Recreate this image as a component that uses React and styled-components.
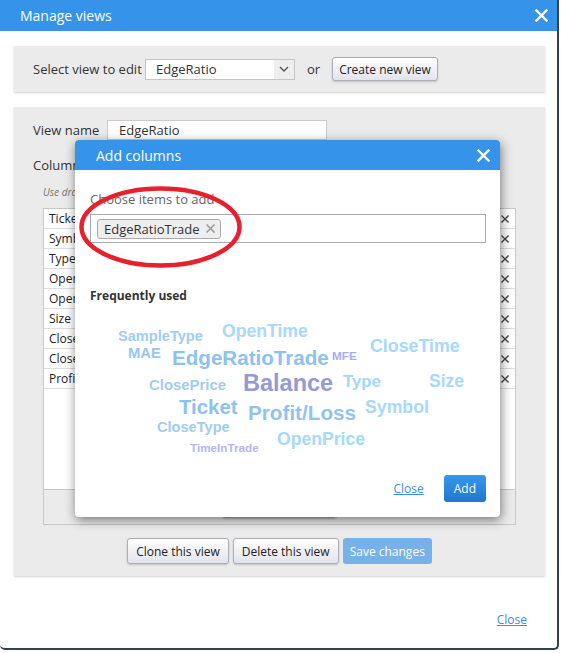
import styled, { createGlobalStyle } from 'styled-components';

const GlobalStyle = createGlobalStyle`
  body {
    margin: 0;
    background: #fff;
    font-family: "Open Sans", "Liberation Sans", sans-serif;
  }
`;

const Dialog = styled.div`
  position: relative;
  width: 559px;
  height: 650px;
  box-sizing: border-box;
  background: #fff;
  border-right: 2px solid #34414f;
  border-bottom: 2px solid #34414f;
  border-radius: 0 0 5px 5px;
  display: flex;
  flex-direction: column;
`;

const Header = styled.div`
  height: 31px;
  background: #3594e9;
  color: #fff;
  font-size: 14px;
  display: flex;
  align-items: center;
  justify-content: space-between;
  padding: 0 9px 0 20px;
`;

const Body = styled.div`
  padding: 15px 12px 0 14px;
`;

const Panel = styled.div`
  background: #ebebeb;
  box-shadow: 0 1px 2px rgba(0, 0, 0, 0.18);
`;

const SelectPanel = styled(Panel)`
  height: 46px;
  display: flex;
  align-items: center;
  padding-left: 19px;
  font-size: 13px;
  color: #333;
`;

const SelectLabel = styled.span`
  width: 112px;
`;

const SelectBox = styled.div`
  width: 150px;
  height: 21px;
  box-sizing: border-box;
  border: 1px solid #c6c6c6;
  background: #fff;
  display: flex;
  align-items: center;
`;

const SelectValue = styled.span`
  flex: 1;
  padding-left: 10px;
  font-size: 13px;
  color: #333;
`;

const SelectArrow = styled.span`
  width: 20px;
  height: 100%;
  background: #eeeeee;
  display: flex;
  align-items: center;
  justify-content: center;
`;

const Or = styled.span`
  margin: 0 12px;
`;

const Button = styled.button`
  height: ${(p) => p.$h || 26}px;
  padding: 0 ${(p) => p.$px || 8}px;
  font-family: "Open Sans", "Liberation Sans", sans-serif;
  font-size: 12px;
  color: #222;
  border: 1px solid #adadb8;
  border-radius: 3px;
  background: linear-gradient(#ffffff, #e3e3ec);
  box-shadow: 0 1px 2px rgba(0, 0, 0, 0.18);
`;

const PrimaryButton = styled.button`
  height: ${(p) => p.$h || 26}px;
  padding: 0 ${(p) => p.$px || 7}px;
  font-family: "Open Sans", "Liberation Sans", sans-serif;
  font-size: 12px;
  color: #fff;
  border: none;
  border-radius: 3px;
  background: ${(p) => (p.$faded ? '#77b1ea' : 'linear-gradient(#3897ea, #1f77d0)')};
`;

const EditPanel = styled(Panel)`
  margin-top: 15px;
  padding: 13px 0 12px;
  display: flex;
  flex-direction: column;
  font-size: 13px;
  color: #333;
`;

const FieldRow = styled.div`
  display: flex;
  align-items: center;
  height: 20px;
  padding-left: 19px;
`;

const FieldLabel = styled.span`
  width: 74px;
`;

const TextInput = styled.input`
  width: 220px;
  height: 20px;
  box-sizing: border-box;
  border: 1px solid #cacaca;
  padding: 0 11px;
  font-family: "Open Sans", "Liberation Sans", sans-serif;
  font-size: 13px;
  color: #333;
  outline: none;
`;

const ColumnsLabel = styled.div`
  margin-top: 16px;
  padding-left: 19px;
  line-height: 18px;
`;

const Hint = styled.div`
  margin: 11px 0 0 29px;
  font-size: 10px;
  font-style: italic;
  color: #777;
  line-height: 14px;
`;

const ColumnsTable = styled.div`
  margin: 9px 29px 0;
  height: 317px;
  box-sizing: border-box;
  border: 1px solid #c8c8c8;
  display: flex;
  flex-direction: column;
`;

const RowList = styled.div`
  height: 280px;
  background: #fff;
  border-bottom: 1px solid #c8c8c8;
`;

const Row = styled.div`
  height: 20px;
  box-sizing: border-box;
  border-bottom: 1px solid #dedede;
  display: flex;
  align-items: center;
  justify-content: space-between;
  padding: 0 6px 0 5px;
  font-size: 12px;
  color: #222;
`;

const TableFooter = styled.div`
  flex: 1;
  display: flex;
  align-items: center;
  justify-content: center;
`;

const ActionRow = styled.div`
  margin-top: 13px;
  display: flex;
  justify-content: center;
  gap: 4px;
`;

const Footer = styled.div`
  display: flex;
  justify-content: flex-end;
  padding: 36px 30px 0 0;
`;

const Link = styled.a`
  font-size: 12px;
  line-height: 16px;
  color: #3a8ee6;
  text-decoration: underline;
`;

const Modal = styled.div`
  position: absolute;
  left: 75px;
  top: 140px;
  width: 425px;
  height: 377px;
  background: #fff;
  border-radius: 4px;
  box-shadow: 1px 3px 11px rgba(0, 0, 0, 0.5);
  display: flex;
  flex-direction: column;
`;

const ModalHeader = styled(Header)`
  height: 30px;
  padding: 0 10px 0 21px;
  border-radius: 4px 4px 0 0;
`;

const ModalBody = styled.div`
  flex: 1;
  padding: 0 14px 15px 15px;
  display: flex;
  flex-direction: column;
`;

const ChooseLabel = styled.div`
  margin-top: 20px;
  line-height: 18px;
  font-size: 13px;
  color: #666;
`;

const TagInput = styled.div`
  margin-top: 6px;
  height: 29px;
  box-sizing: border-box;
  border: 1px solid #aaa;
  padding: 0 6px;
  display: flex;
  align-items: center;
`;

const Tag = styled.span`
  height: 20px;
  box-sizing: border-box;
  border: 1px solid #aaa;
  border-radius: 3px;
  background: #eee;
  padding: 0 5px 0 6px;
  display: flex;
  align-items: center;
  gap: 7px;
  font-size: 13px;
  color: #333;
`;

const FreqTitle = styled.div`
  margin-top: 45px;
  font-size: 12px;
  font-weight: 700;
  line-height: 16px;
  color: #333;
`;

const Cloud = styled.div`
  position: relative;
  flex: 1;
`;

const Word = styled.span`
  position: absolute;
  left: ${(p) => p.$x - 90}px;
  top: ${(p) => p.$y - 304 - p.$s / 2}px;
  font-family: "Liberation Sans", Arial, sans-serif;
  font-weight: 700;
  font-size: ${(p) => p.$s}px;
  line-height: 1;
  white-space: nowrap;
  color: ${(p) => p.$c};
`;

const ModalFooter = styled.div`
  display: flex;
  justify-content: flex-end;
  align-items: center;
  gap: 20px;
`;

const Annotation = styled.svg`
  position: absolute;
  left: 0;
  top: 40px;
  pointer-events: none;
`;

const CloseIcon = ({ size = 13, width = 2.4, color = '#fff' }) => (
  <svg width={size} height={size} viewBox="0 0 13 13">
    <path d="M1.5 1.5 L11.5 11.5 M11.5 1.5 L1.5 11.5" stroke={color} strokeWidth={width} strokeLinecap="square" />
  </svg>
);

const Chevron = () => (
  <svg width="10" height="6" viewBox="0 0 10 6">
    <path d="M1 1 L5 5 L9 1" fill="none" stroke="#555" strokeWidth="1.4" />
  </svg>
);

const rows = ['Ticket', 'Symbol', 'Type', 'OpenTime', 'OpenPrice', 'Size', 'CloseTime', 'ClosePrice', 'Profit/Loss'];

const words = [
  ['SampleType', 118, 336, 14.6, '#9fcdf1'],
  ['OpenTime', 222, 332, 17.6, '#a6d9fb'],
  ['MAE', 128, 353, 14.8, '#98c6ef'],
  ['EdgeRatioTrade', 172, 358, 20.6, '#8dc2ee'],
  ['MFE', 332, 357, 11.8, '#aaabee'],
  ['CloseTime', 370, 347, 17.8, '#a6d9fb'],
  ['ClosePrice', 149, 385, 14.9, '#9fcdf1'],
  ['Balance', 243, 384, 23.5, '#9599d8'],
  ['Type', 343, 382, 16.7, '#a3d7fb'],
  ['Size', 429, 382, 17.5, '#a6d9fb'],
  ['Ticket', 179, 407, 20.4, '#8dc2ee'],
  ['Profit/Loss', 248, 413, 20.7, '#90c4ef'],
  ['Symbol', 365, 408, 17.7, '#a6d9fb'],
  ['CloseType', 157, 427, 14.6, '#9fcdf1'],
  ['OpenPrice', 277, 440, 17.6, '#a6d9fb'],
  ['TimeInTrade', 190, 448, 11.7, '#b4b4f4'],
];

const App = () => {
  return (
    <>
      <GlobalStyle />
      <Dialog>
        <Header>
          <span>Manage views</span>
          <CloseIcon />
        </Header>
        <Body>
          <SelectPanel>
            <SelectLabel>Select view to edit</SelectLabel>
            <SelectBox>
              <SelectValue>EdgeRatio</SelectValue>
              <SelectArrow><Chevron /></SelectArrow>
            </SelectBox>
            <Or>or</Or>
            <Button $h={24} $px={6}>Create new view</Button>
          </SelectPanel>
          <EditPanel>
            <FieldRow>
              <FieldLabel>View name</FieldLabel>
              <TextInput readOnly defaultValue="EdgeRatio" />
            </FieldRow>
            <ColumnsLabel>Columns</ColumnsLabel>
            <Hint>Use drag and drop</Hint>
            <ColumnsTable>
              <RowList>
                {rows.map((r) => (
                  <Row key={r}>
                    <span>{r}</span>
                    <CloseIcon size={8} width={2.2} color="#444" />
                  </Row>
                ))}
              </RowList>
              <TableFooter>
                <Button $h={22} $px={20}>Add columns</Button>
              </TableFooter>
            </ColumnsTable>
            <ActionRow>
              <Button>Clone this view</Button>
              <Button>Delete this view</Button>
              <PrimaryButton $faded>Save changes</PrimaryButton>
            </ActionRow>
          </EditPanel>
        </Body>
        <Footer>
          <Link>Close</Link>
        </Footer>

        <Modal>
          <ModalHeader>
            <span>Add columns</span>
            <CloseIcon />
          </ModalHeader>
          <ModalBody>
            <ChooseLabel>Choose items to add</ChooseLabel>
            <TagInput>
              <Tag>
                EdgeRatioTrade
                <CloseIcon size={9} width={2.2} color="#999" />
              </Tag>
            </TagInput>
            <FreqTitle>Frequently used</FreqTitle>
            <Cloud>
              {words.map(([t, x, y, s, c]) => (
                <Word key={t} $x={x} $y={y} $s={s} $c={c}>{t}</Word>
              ))}
            </Cloud>
            <ModalFooter>
              <Link>Close</Link>
              <PrimaryButton $h={27} $px={10}>Add</PrimaryButton>
            </ModalFooter>
          </ModalBody>
          <Annotation width="175" height="100" viewBox="0 0 175 100">
            <ellipse cx="85.5" cy="47" rx="79" ry="38.5" fill="none" stroke="#e8202b" strokeWidth="4.5" />
          </Annotation>
        </Modal>
      </Dialog>
    </>
  );
};

export default App;
